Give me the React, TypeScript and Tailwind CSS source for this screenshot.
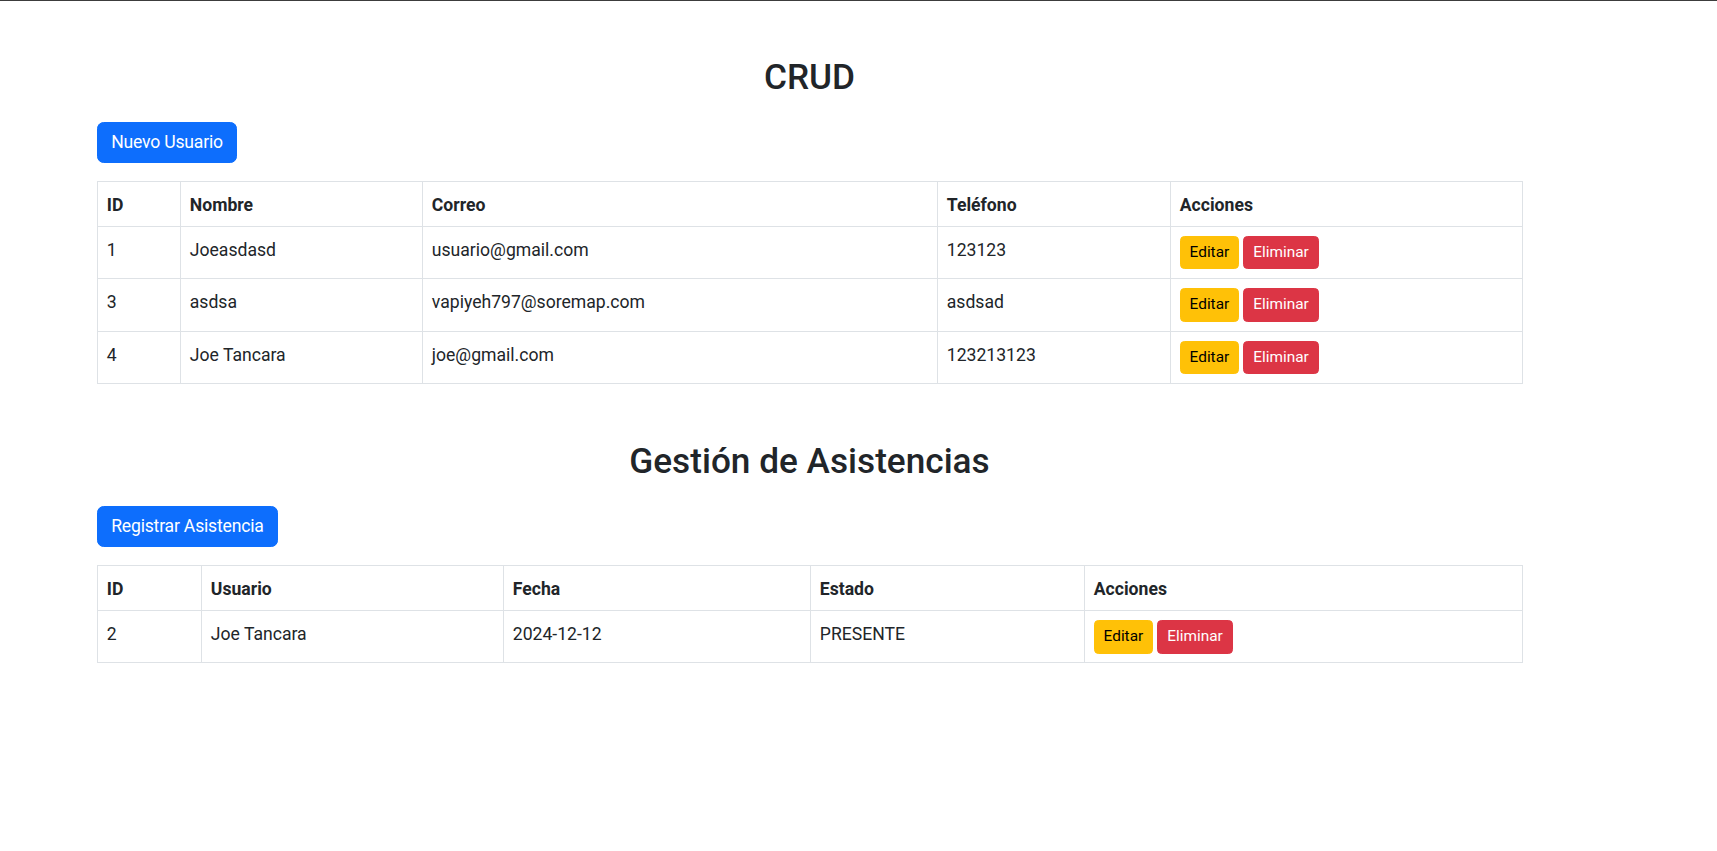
import React from 'react';

type Col = { label: string; width: string };

const userCols: Col[] = [
  { label: 'ID', width: 'w-[83px]' },
  { label: 'Nombre', width: 'w-[242px]' },
  { label: 'Correo', width: 'w-[515px]' },
  { label: 'Teléfono', width: 'w-[233px]' },
  { label: 'Acciones', width: 'w-[352px]' },
];

const attendanceCols: Col[] = [
  { label: 'ID', width: 'w-[104px]' },
  { label: 'Usuario', width: 'w-[302px]' },
  { label: 'Fecha', width: 'w-[307px]' },
  { label: 'Estado', width: 'w-[274px]' },
  { label: 'Acciones', width: 'w-[438px]' },
];

const users = [
  { id: 1, nombre: 'Joeasdasd', correo: 'usuario@gmail.com', telefono: '123123' },
  { id: 3, nombre: 'asdsa', correo: 'vapiyeh797@soremap.com', telefono: 'asdsad' },
  { id: 4, nombre: 'Joe Tancara', correo: 'joe@gmail.com', telefono: '123213123' },
];

const asistencias = [{ id: 2, usuario: 'Joe Tancara', fecha: '2024-12-12', estado: 'PRESENTE' }];

const cell = 'border border-[#dee2e6] px-[8.8px] pt-[9.8px] pb-[7.8px] align-top text-left';

const Actions: React.FC = () => (
  <div className="flex gap-[4.4px] -mt-px mb-px">
    <button className="bg-[#ffc107] border border-[#ffc107] text-black text-[15.4px] leading-[23.1px] px-[8.8px] py-[4.4px] rounded-[4.4px]">
      Editar
    </button>
    <button className="bg-[#dc3545] border border-[#dc3545] text-white text-[15.4px] leading-[23.1px] px-[8.8px] py-[4.4px] rounded-[4.4px]">
      Eliminar
    </button>
  </div>
);

const Section: React.FC<{
  title: string;
  action: string;
  cols: Col[];
  children: React.ReactNode;
  className?: string;
}> = ({ title, action, cols, children, className }) => (
  <section className={className}>
    <h2 className="text-center text-[35.2px] font-medium leading-[1.2] pt-[3px] mb-[23.4px]">{title}</h2>
    <div className="flex mb-[17.6px]">
      <button className="bg-[#0d6efd] border border-[#0d6efd] text-white text-[17.6px] leading-[26.4px] px-[13.2px] py-[6.6px] rounded-[6.6px] tracking-[-0.2px]">
        {action}
      </button>
    </div>
    <table className="w-full table-fixed border-collapse">
      <thead>
        <tr>
          {cols.map((c) => (
            <th key={c.label} className={`${cell} ${c.width} font-bold`}>
              {c.label}
            </th>
          ))}
        </tr>
      </thead>
      <tbody>{children}</tbody>
    </table>
  </section>
);

export default function App() {
  return (
    <div className="min-h-screen bg-white border-t border-[#3c3c3c] text-[#212529] text-[17.6px] leading-[26.4px] font-['Roboto',sans-serif]">
      <div className="ml-[97px] w-[1425px] pt-[52px]">
        <Section title="CRUD" action="Nuevo Usuario" cols={userCols}>
          {users.map((u) => (
            <tr key={u.id}>
              <td className={cell}>{u.id}</td>
              <td className={cell}>{u.nombre}</td>
              <td className={cell}>{u.correo}</td>
              <td className={cell}>{u.telefono}</td>
              <td className={cell}>
                <Actions />
              </td>
            </tr>
          ))}
        </Section>

        <Section title="Gestión de Asistencias" action="Registrar Asistencia" cols={attendanceCols} className="mt-[52.8px]">
          {asistencias.map((a) => (
            <tr key={a.id}>
              <td className={cell}>{a.id}</td>
              <td className={cell}>{a.usuario}</td>
              <td className={cell}>{a.fecha}</td>
              <td className={cell}>{a.estado}</td>
              <td className={cell}>
                <Actions />
              </td>
            </tr>
          ))}
        </Section>
      </div>
    </div>
  );
}
